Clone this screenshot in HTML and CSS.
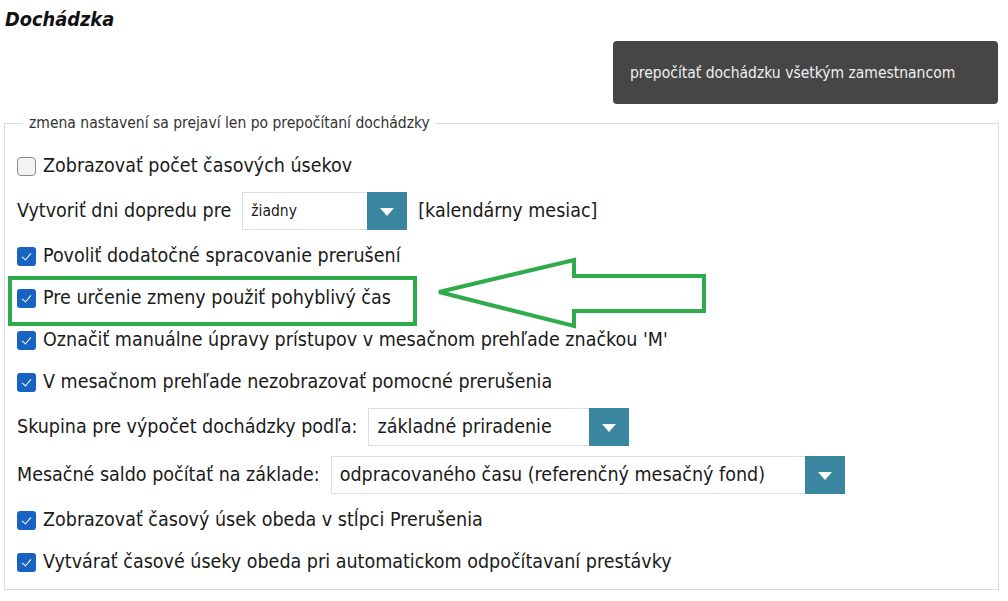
FILE: index.html
```html
<!DOCTYPE html>
<html lang="sk">
<head>
<meta charset="utf-8">
<title>Dochádzka</title>
<link rel="stylesheet" href="styles.css">
</head>
<body>
<div class="page">
  <h1 class="title">Dochádzka</h1>
  <div class="actions">
    <button class="recalc" type="button">prepočítať dochádzku všetkým zamestnancom</button>
  </div>
  <fieldset class="settings">
    <legend class="legend">zmena nastavení sa prejaví len po prepočítaní dochádzky</legend>

    <label class="row"><span class="cb"></span>Zobrazovať počet časových úsekov</label>

    <div class="row row-select">
      <span>Vytvoriť dni dopredu pre</span>
      <span class="select select-small"><span class="select-text">žiadny</span><span class="select-btn"><span class="tri"></span></span></span>
      <span>[kalendárny mesiac]</span>
    </div>

    <label class="row"><span class="cb checked"></span>Povoliť dodatočné spracovanie prerušení</label>

    <label class="row highlight"><span class="cb checked"></span>Pre určenie zmeny použiť pohyblivý čas</label>

    <label class="row"><span class="cb checked"></span>Označiť manuálne úpravy prístupov v mesačnom prehľade značkou 'M'</label>

    <label class="row"><span class="cb checked"></span>V mesačnom prehľade nezobrazovať pomocné prerušenia</label>

    <div class="row row-select">
      <span>Skupina pre výpočet dochádzky podľa:</span>
      <span class="select select-group"><span class="select-text">základné priradenie</span><span class="select-btn"><span class="tri"></span></span></span>
    </div>

    <div class="row row-select">
      <span>Mesačné saldo počítať na základe:</span>
      <span class="select select-saldo"><span class="select-text">odpracovaného času (referenčný mesačný fond)</span><span class="select-btn"><span class="tri"></span></span></span>
    </div>

    <label class="row"><span class="cb checked"></span>Zobrazovať časový úsek obeda v stĺpci Prerušenia</label>

    <label class="row"><span class="cb checked"></span>Vytvárať časové úseky obeda pri automatickom odpočítavaní prestávky</label>

    <svg class="arrow" width="280" height="80" viewBox="0 0 280 80" aria-hidden="true">
      <polygon points="6,35 141,3 141,19 271,19 271,54 141,54 141,69" fill="none" stroke="#2eab4b" stroke-width="4" stroke-linejoin="miter"/>
    </svg>
  </fieldset>
</div>
</body>
</html>
```

FILE: styles.css
```css
* { box-sizing: border-box; }

html, body {
  margin: 0;
  padding: 0;
  background: #ffffff;
}

body {
  font-family: "DejaVu Sans Condensed", "DejaVu Sans", sans-serif;
  color: #1a1a1a;
  width: 1008px;
  height: 601px;
  overflow: hidden;
}

.page {
  display: flex;
  flex-direction: column;
  padding: 7px 10px 0 4px;
}

.title {
  margin: 0 0 0 1px;
  font-size: 19.8px;
  font-weight: bold;
  font-style: italic;
  line-height: 25px;
  color: #111;
}

.actions {
  display: flex;
  justify-content: flex-end;
  margin-top: 9px;
}

.recalc {
  width: 385px;
  height: 63px;
  margin-right: 0;
  background: #464646;
  color: #f0f0f0;
  border: none;
  border-radius: 4px;
  font-family: "DejaVu Sans Condensed", "DejaVu Sans", sans-serif;
  font-size: 15.5px;
  text-align: left;
  padding: 0 0 0 17px;
}

.settings {
  position: relative;
  margin: 10px 0 0 0;
  padding: 13px 12px 6px 12px;
  border: 1px solid #dcdcdc;
  width: 995px;
  min-width: 0;
  display: flex;
  flex-direction: column;
}

.legend {
  margin-left: 6px;
  padding: 0 6px 0 6px;
  font-size: 15.5px;
  color: #333;
}

.row {
  display: flex;
  align-items: center;
  height: 42px;
  font-size: 19.5px;
  line-height: 24px;
  gap: 0;
}

.row-select {
  height: 48px;
  gap: 11px;
}

.cb {
  width: 19px;
  height: 19px;
  margin-right: 7px;
  border-radius: 4px;
  border: 1px solid #8a8a8a;
  background: #f4f4f4;
  flex: none;
  position: relative;
}

.cb.checked {
  border: none;
  background: #1763c4;
  border-radius: 3px;
}

.cb.checked::after {
  content: "";
  position: absolute;
  left: 7px;
  top: 4px;
  width: 4px;
  height: 8px;
  border-right: 1px solid #ffffff;
  border-bottom: 1px solid #ffffff;
  transform: rotate(40deg);
}

.select {
  display: flex;
  height: 38px;
  border: 1px solid #dddddd;
  background: #fff;
}

.select-text {
  flex: 1;
  display: flex;
  align-items: center;
  padding-left: 8px;
  white-space: nowrap;
  overflow: hidden;
}

.select-small { width: 165px; }
.select-small .select-text { font-size: 15.5px; }
.select-group { width: 261px; }
.select-saldo { width: 514px; }

.select-btn {
  width: 40px;
  flex: none;
  background: #3a86a1;
  display: flex;
  align-items: center;
  justify-content: center;
  margin: -1px -1px -1px 0;
}

.tri {
  width: 0;
  height: 0;
  border-left: 7px solid transparent;
  border-right: 7px solid transparent;
  border-top: 8px solid #ffffff;
  margin-top: 2px;
}

.highlight {
  position: relative;
}

.highlight::before {
  content: "";
  position: absolute;
  left: -9px;
  top: -1px;
  width: 401px;
  height: 42px;
  border: 4px solid #2eab4b;
}

.arrow {
  position: absolute;
  left: 428px;
  top: 125px;
}
```
